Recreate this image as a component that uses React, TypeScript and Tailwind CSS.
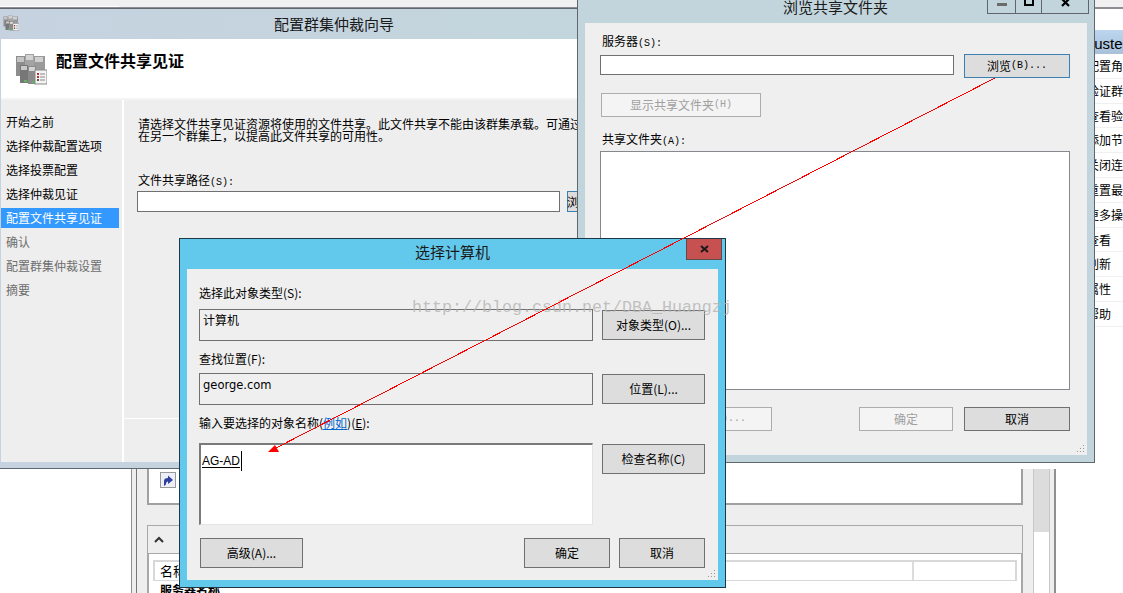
const navItems = [
  { label: "开始之前", state: "done" },
  { label: "选择仲裁配置选项", state: "done" },
  { label: "选择投票配置", state: "done" },
  { label: "选择仲裁见证", state: "done" },
  { label: "配置文件共享见证", state: "active" },
  { label: "确认", state: "todo" },
  { label: "配置群集仲裁设置", state: "todo" },
  { label: "摘要", state: "todo" },
];

const actions = ["配置角色...", "验证群集...", "查看验证报告", "添加节点...", "关闭连接", "重置最近事件", "更多操作", "查看", "刷新", "属性", "帮助"];

const Btn = ({ className, children }: { className: string; children: React.ReactNode }) => {
  return (
    <div className={`flex shrink-0 items-center justify-center whitespace-nowrap border text-xs text-black ${className}`}>
      {children}
    </div>
  );
};

// half width latin of the old bitmap font: 6px per character
const Latin = ({ children }: { children: React.ReactNode }) => {
  return <span className="font-['Liberation_Mono',monospace] text-[10px] leading-none">{children}</span>;
};

const ServerIcon = ({ className }: { className: string }) => {
  return (
    <svg className={className} viewBox="0 0 32 32">
      <rect x="1" y="3" width="9" height="20" fill="#8d8d8d" />
      <rect x="2" y="4" width="7" height="5" fill="#c4c4c4" />
      <rect x="10" y="1" width="9" height="20" fill="#a3a3a3" />
      <rect x="11" y="2" width="7" height="5" fill="#d2d2d2" />
      <rect x="19" y="3" width="11" height="18" fill="#9a9a9a" />
      <rect x="20" y="4" width="8" height="5" fill="#d0d0d0" />
      <rect x="5" y="12" width="8" height="18" fill="#777" />
      <rect x="6" y="13" width="6" height="4" fill="#c9c9c9" />
      <rect x="13" y="13" width="8" height="18" fill="#8a8a8a" />
      <rect x="14" y="14" width="6" height="4" fill="#d4d4d4" />
      <rect x="9" y="27" width="3" height="2" fill="#5cb85c" />
      <rect x="17" y="28" width="3" height="2" fill="#5cb85c" />
      <rect x="20" y="17" width="12" height="14" fill="#f4f4f4" stroke="#8a8a8a" />
      <rect x="22" y="20" width="2" height="2" fill="#b33" />
      <rect x="22" y="23" width="2" height="2" fill="#b33" />
      <rect x="22" y="26" width="2" height="2" fill="#555" />
      <path d="M25 21h5M25 24h5M25 27h5" stroke="#888" />
    </svg>
  );
};

const Grip = ({ className }: { className: string }) => {
  return (
    <svg className={className} viewBox="0 0 8 8" fill="#9a9a9a">
      <rect x="6" y="0" width="1" height="1" />
      <rect x="3" y="3" width="1" height="1" />
      <rect x="6" y="3" width="1" height="1" />
      <rect x="0" y="6" width="1" height="1" />
      <rect x="3" y="6" width="1" height="1" />
      <rect x="6" y="6" width="1" height="1" />
    </svg>
  );
};

const BackgroundWindows = () => {
  return (
    <>
      <div className="absolute left-0 top-0 h-[9px] w-full border-b-2 border-[#8b8f94] bg-[#f0f0f0]" />
      <div className="absolute left-0 top-[6px] h-px w-[119px] bg-white" />
      {/* actions pane, right side */}
      <div className="absolute left-[1056px] top-[9px] h-[584px] w-[67px] overflow-hidden bg-white">
        <div className="mt-[21px] h-[24px] w-[120px] whitespace-nowrap bg-gradient-to-b from-[#bcd6f0] to-[#a9c0d8] pl-[24px] pt-px font-['Liberation_Sans',sans-serif] text-[15px] leading-[25px] text-black">
          Cluster
        </div>
        {actions.map((a) => (
          <div key={a} className="h-[24.8px] w-[120px] whitespace-nowrap border-b border-[#f0f0f0] pl-[31px] text-xs leading-[24px] text-black">
            {a}
          </div>
        ))}
      </div>
      {/* manager window under the dialogs */}
      <div className="absolute left-[131px] top-[469px] flex h-[124px] w-[925px] border-l border-r-2 border-[#8f8f8f] bg-[#eeeeee]">
        <div className="h-full w-[5px] shrink-0 border-r border-[#777]" />
        <div className="w-[886px] shrink-0 pl-[10px]">
          <div className="h-[36px] border-b-2 border-l-2 border-r-2 border-[#a0a0a0] bg-white pl-[11px] pt-[3px]">
            <svg className="h-[17px] w-[17px]" viewBox="0 0 17 17">
              <rect x="0.5" y="0.5" width="15" height="15" fill="#eeeef8" stroke="#999" />
              <path d="M4 14V9q0-3 4-3V3.5L13 8l-5 4V9.5q-2 0-2 3z" fill="#2f3f9f" />
            </svg>
          </div>
          <div className="mt-[20px] h-[70px] border border-[#a8a8a8]">
            <div className="flex h-[28px] items-center border-b border-[#a8a8a8] pl-[6px]">
              <svg className="h-[8px] w-[10px]" viewBox="0 0 10 8" fill="none" stroke="#333" strokeWidth="2">
                <path d="M1 6l4-4 4 4" />
              </svg>
            </div>
            <div className="h-[40px] border-l border-r border-[#a8a8a8] bg-white pl-[4px] pr-[4px] pt-[6px]">
              <div className="flex h-[21px] border-2 border-b border-[#d8d8d8] text-[13px] leading-[18px] text-black">
                <div className="w-[759px] border-r-2 border-[#dcdcdc] pl-[5px]">名称</div>
              </div>
              <div className="pl-[7px] text-xs font-bold leading-[17px] text-black">服务器名称</div>
            </div>
          </div>
        </div>
        <div className="ml-[10px] h-full w-[17px] shrink-0 border-x border-[#c8c8c8] bg-white">
          <div className="h-[63px] bg-[#dcdcdc]" />
        </div>
      </div>
    </>
  );
};

const WizardWindow = () => {
  return (
    <div className="absolute left-0 top-[8px] flex h-[461px] w-[668px] flex-col border-b border-t border-[#5f666e] bg-gradient-to-r from-[#c6d2e0] to-[#c2d6dc] px-px pb-[6px]">
      <div className="relative flex h-[30px] shrink-0 items-center justify-center text-[15px] text-[#1a1a1a]">
        <ServerIcon className="absolute left-[2px] top-[6px] h-[16px] w-[16px]" />
        配置群集仲裁向导
      </div>
      <div className="flex h-[59px] shrink-0 items-center gap-[9px] bg-white pl-[14px]">
        <ServerIcon className="h-[32px] w-[32px]" />
        <div className="mb-[17px] text-base font-bold text-black">配置文件共享见证</div>
      </div>
      <div className="flex min-h-0 flex-1 border-t-2 border-[#f4f4f4] bg-white">
        <div className="w-[121px] shrink-0 bg-[#eeeeee] pt-[12px]">
          {navItems.map((n) => (
            <div
              key={n.label}
              className={
                n.state === "active"
                  ? "mb-[4px] mr-[3px] h-[20px] bg-[#3399ff] pl-[5px] text-xs leading-[20px] text-white"
                  : n.state === "done"
                    ? "mb-[4px] mr-[3px] h-[20px] pl-[5px] text-xs leading-[20px] text-black"
                    : "mb-[4px] mr-[3px] h-[20px] pl-[5px] text-xs leading-[20px] text-[#6d6d6d]"
              }
            >
              {n.label}
            </div>
          ))}
        </div>
        <div className="ml-[2px] flex flex-1 flex-col">
          <div className="h-[318px] bg-[#eeeeee] pl-[14px] pt-[18px]">
            <p className="whitespace-nowrap text-xs leading-[12px] text-black">
              请选择文件共享见证资源将使用的文件共享。此文件共享不能由该群集承载。可通过将此文件共享放
            </p>
            <p className="whitespace-nowrap text-xs leading-[12px] text-black">在另一个群集上，以提高此文件共享的可用性。</p>
            <div className="mt-[31px] h-[14px] text-xs leading-[14px] text-black">
              文件共享路径<Latin>(S):</Latin>
            </div>
            <div className="-ml-px mt-[4px] flex">
              <div className="h-[21px] w-[423px] border border-[#707070] bg-white" />
              <Btn className="ml-[7px] h-[21px] w-[60px] border-[#3c7fb1] bg-[#dddddd]">
                浏览<Latin>(R)...</Latin>
              </Btn>
            </div>
          </div>
          <div className="flex-1 border-t border-white bg-[#eeeeee]" />
        </div>
      </div>
    </div>
  );
};

const BrowseWindow = () => {
  return (
    <div className="absolute left-[577px] top-[-8px] flex h-[471px] w-[518px] flex-col border border-[#5f666e] bg-[#c2d5dc] px-[7px] pb-[7px]">
      <div className="flex h-[30px] shrink-0 items-center justify-center pb-[2px] pr-[1px] text-[15px] text-[#1a1a1a]">浏览共享文件夹</div>
      <div className="absolute right-[5px] top-0 flex h-[21px] w-[102px] border border-t-0 border-[#5f666e]">
        <div className="flex w-[28px] items-end justify-center border-r border-[#5f666e] pb-[7px]">
          <div className="h-[3px] w-[10px] bg-[#6b6b6b]" />
        </div>
        <div className="flex w-[26px] items-start justify-center border-r border-[#5f666e] pt-[4px]">
          <div className="h-[9px] w-[10px] border-2 border-t-[3px] border-black" />
        </div>
        <div className="flex flex-1 items-start justify-center pt-[5px]">
          <svg className="h-[9px] w-[9px]" viewBox="0 0 9 9" stroke="#000" strokeWidth="2.2">
            <path d="M1 1l7 7M8 1L1 8" />
          </svg>
        </div>
      </div>
      <div className="relative flex-1 bg-[#efefef] pl-[15px] pt-[11px]">
        <div className="ml-[2px] h-[14px] text-xs leading-[14px] text-black">
          服务器<Latin>(S):</Latin>
        </div>
        <div className="mt-[6px] flex items-start gap-[10px]">
          <div className="mt-px h-[20px] w-[354px] border border-[#707070] bg-white" />
          <Btn className="h-[24px] w-[106px] border-[#3c7fb1] bg-[#dddddd]">
            浏览<Latin>(B)...</Latin>
          </Btn>
        </div>
        <Btn className="ml-px mt-[15px] h-[24px] w-[160px] border-[#adadad] bg-[#f4f4f4] !text-[#a0a0a0]">
          显示共享文件夹<Latin>(H)</Latin>
        </Btn>
        <div className="ml-[2px] mt-[15px] h-[14px] text-xs leading-[14px] text-black">
          共享文件夹<Latin>(A):</Latin>
        </div>
        <div className="mt-[5px] h-[239px] w-[470px] border border-[#85888c] bg-white" />
        <div className="mt-[17px] flex">
          <Btn className="h-[24px] w-[172px] border-[#adadad] bg-[#f4f4f4] !text-[#a0a0a0]">
            新建共享文件夹<Latin>(N)...</Latin>
          </Btn>
          <Btn className="ml-[87px] h-[24px] w-[94px] border-[#adadad] bg-[#f4f4f4] !text-[#a0a0a0]">确定</Btn>
          <Btn className="ml-[11px] h-[24px] w-[106px] border-[#707070] bg-[#dddddd]">取消</Btn>
        </div>
        <Grip className="absolute bottom-[2px] right-[2px] h-[8px] w-[8px]" />
      </div>
    </div>
  );
};

const SelectWindow = () => {
  return (
    <div className="absolute left-[179px] top-[238px] flex h-[350px] w-[547px] flex-col border border-[#1f3645] bg-[#63c9ec] px-[7px] pb-[7px]">
      <div className="flex h-[30px] shrink-0 items-center justify-center pb-[3px] text-[15px] text-[#1a1a1a]">选择计算机</div>
      <div className="absolute right-[3px] top-0 flex h-[21px] w-[36px] items-center justify-center border border-t-0 border-[#5f4a4a] bg-[#c75050]">
        <svg className="h-[8px] w-[9px]" viewBox="0 0 9 8" stroke="#1a1a1a" strokeWidth="2">
          <path d="M1 1l7 6M8 1L1 7" />
        </svg>
      </div>
      <div className="relative flex-1 bg-[#efefef] pl-[12px] pt-[17px]">
        <div className="text-xs leading-[14px] text-black">选择此对象类型(S):</div>
        <div className="mt-[9px] flex items-start gap-[9px]">
          <div className="h-[32px] w-[394px] border border-[#707070] pl-[3px] text-xs leading-[20px] text-black">计算机</div>
          <Btn className="mt-px h-[30px] w-[103px] border-[#707070] bg-[#dddddd]">对象类型(O)...</Btn>
        </div>
        <div className="mt-[11px] text-xs leading-[14px] text-black">查找位置(F):</div>
        <div className="mt-[7px] flex items-start gap-[9px]">
          <div className="h-[32px] w-[394px] border border-[#707070] pl-[3px] font-['DejaVu_Sans',sans-serif] text-[11.5px] leading-[22px] text-black">
            george.com
          </div>
          <Btn className="mt-px h-[30px] w-[103px] border-[#707070] bg-[#dddddd]">位置(L)...</Btn>
        </div>
        <div className="mt-[11px] text-xs leading-[14px] text-black">
          输入要选择的对象名称(<span className="text-[#0066cc] underline">例如</span>)(<span className="underline">E</span>):
        </div>
        <div className="mt-[13px] flex items-start gap-[9px]">
          <div className="h-[82px] w-[394px] border-2 border-b border-r border-[#7a7a7a] border-b-[#e4e4e4] border-r-[#e4e4e4] bg-white pl-[1px] pt-[6px]">
            <div className="flex items-center font-['Liberation_Sans',sans-serif] text-xs leading-[20px] text-black">
              <span className="underline underline-offset-2">AG-AD</span>
              <span className="ml-px h-[20px] w-px bg-black" />
            </div>
          </div>
          <Btn className="mt-px h-[30px] w-[103px] border-[#707070] bg-[#dddddd]">检查名称(C)</Btn>
        </div>
        <div className="ml-px mt-[13px] flex">
          <Btn className="h-[30px] w-[103px] border-[#707070] bg-[#dddddd]">高级(A)...</Btn>
          <Btn className="ml-[221px] h-[30px] w-[86px] border-[#707070] bg-[#dddddd]">确定</Btn>
          <Btn className="ml-[9px] h-[30px] w-[86px] border-[#707070] bg-[#dddddd]">取消</Btn>
        </div>
        <Grip className="absolute bottom-[2px] right-[2px] h-[8px] w-[8px]" />
      </div>
    </div>
  );
};

export default function App() {
  return (
    <div className="relative h-[593px] w-[1123px] overflow-hidden bg-white font-['Noto_Sans_CJK_SC',sans-serif]">
      <BackgroundWindows />
      <WizardWindow />
      <BrowseWindow />
      <SelectWindow />
      <div className="absolute left-[412px] top-[298px] whitespace-nowrap font-['Liberation_Mono',monospace] text-[16.67px] leading-[20px] text-[#b4b4b4]/80">
        http://blog.csdn.net/DBA_Huangzj
      </div>
      <svg className="absolute inset-0 h-[593px] w-[1123px]" viewBox="0 0 1123 593">
        <path d="M995 78L274 449" stroke="#ff0000" strokeWidth="1" fill="none" shapeRendering="crispEdges" />
        <polygon points="268,452 279,452 275,445" fill="#ff0000" />
      </svg>
    </div>
  );
}
